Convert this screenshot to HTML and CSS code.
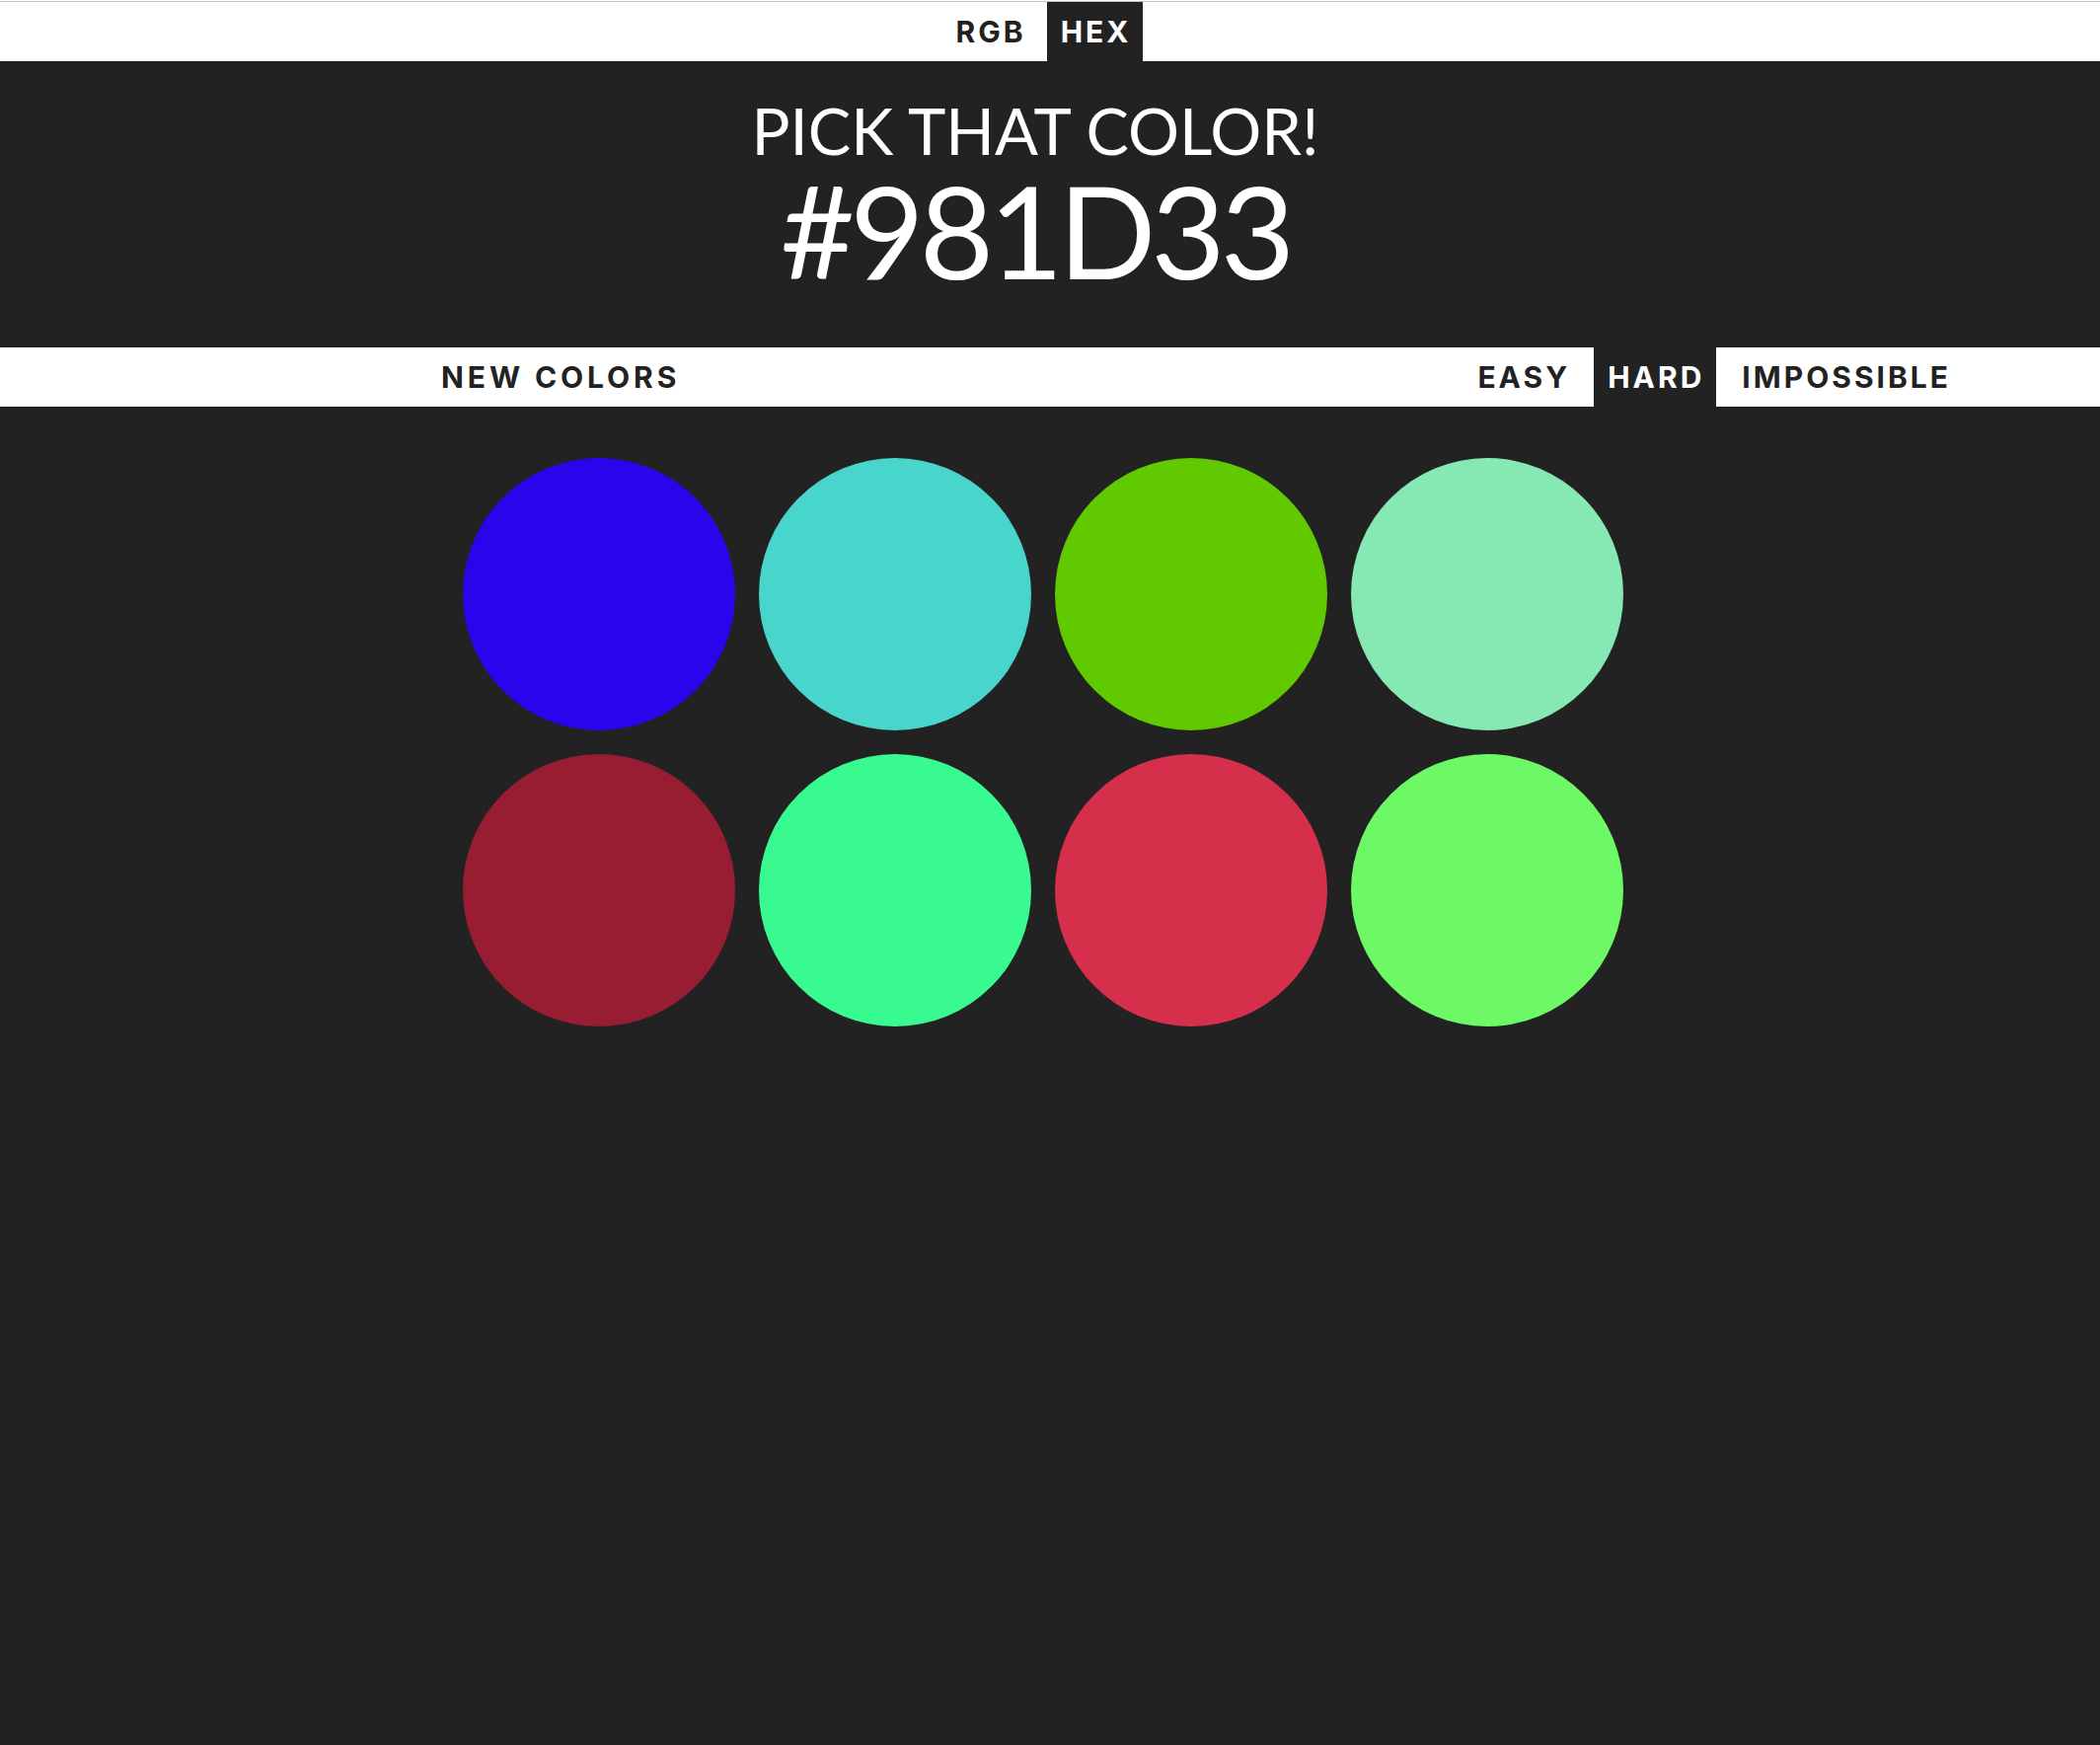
FILE: index.html
```html
<!DOCTYPE html>
<html lang="en">
<head>
<meta charset="utf-8">
<title>Pick That Color!</title>
<link rel="stylesheet" href="styles.css">
</head>
<body>
  <div class="topline"></div>
  <nav class="format-bar">
    <div class="format-group">
      <button class="btn">RGB</button>
      <button class="btn active">HEX</button>
    </div>
  </nav>
  <header class="hero">
    <h1 class="title">PICK THAT COLOR!</h1>
    <h2 class="target">#981D33</h2>
  </header>
  <nav class="mode-bar">
    <button class="btn btn-wide">NEW COLORS</button>
    <div class="levels">
      <button class="btn">EASY</button>
      <button class="btn active">HARD</button>
      <button class="btn">IMPOSSIBLE</button>
    </div>
  </nav>
  <main class="board">
    <div class="grid">
      <div class="swatch c1"></div>
      <div class="swatch c2"></div>
      <div class="swatch c3"></div>
      <div class="swatch c4"></div>
      <div class="swatch c5"></div>
      <div class="swatch c6"></div>
      <div class="swatch c7"></div>
      <div class="swatch c8"></div>
    </div>
  </main>
</body>
</html>
```
FILE: styles.css
```css
html, body {
  margin: 0;
  padding: 0;
}
body {
  background: #222222;
  min-height: 1768px;
  font-family: "Lato", "Open Sans", sans-serif;
  color: #ffffff;
}
.topline {
  height: 1px;
  background: #ffffff;
  border-bottom: 1px solid #c0c0c0;
}
.format-bar {
  background: #ffffff;
  height: 60px;
  display: flex;
  justify-content: center;
  padding-right: 15px;
}
.format-group {
  display: flex;
  align-items: stretch;
  gap: 9px;
}
.btn {
  font-family: "Inter", "Liberation Sans", sans-serif;
  font-weight: 700;
  font-size: 30px;
  letter-spacing: 0.1em;
  color: #222222;
  background: transparent;
  border: 0;
  margin: 0;
  padding: 0 12px 0 14px;
  display: flex;
  align-items: center;
  cursor: pointer;
}
.btn-wide {
  letter-spacing: 0.13em;
}
.btn.active {
  background: #222222;
  color: #ffffff;
}
.hero {
  text-align: center;
  padding: 38px 30px 54px 0;
}
.title {
  margin: 0;
  font-weight: 400;
  font-size: 65px;
  line-height: 1;
  letter-spacing: 0;
}
.target {
  margin: 3px 0 0;
  font-weight: 400;
  font-size: 130px;
  line-height: 1;
  letter-spacing: -5px;
}
.mode-bar {
  background: #ffffff;
  height: 60px;
  display: flex;
  justify-content: space-between;
  padding: 0 139px 0 433px;
}
.levels {
  display: flex;
  gap: 12px;
}
.board {
  padding: 52px 15px 0 0;
  display: flex;
  justify-content: center;
}
.grid {
  display: grid;
  grid-template-columns: repeat(4, 276px);
  gap: 24px;
}
.swatch {
  width: 276px;
  height: 276px;
  border-radius: 50%;
}
.c1 { background: #2b04ec; }
.c2 { background: #48d5cb; }
.c3 { background: #61c900; }
.c4 { background: #86e8b2; }
.c5 { background: #981d33; }
.c6 { background: #38fa90; }
.c7 { background: #d62f4c; }
.c8 { background: #6df866; }
```
